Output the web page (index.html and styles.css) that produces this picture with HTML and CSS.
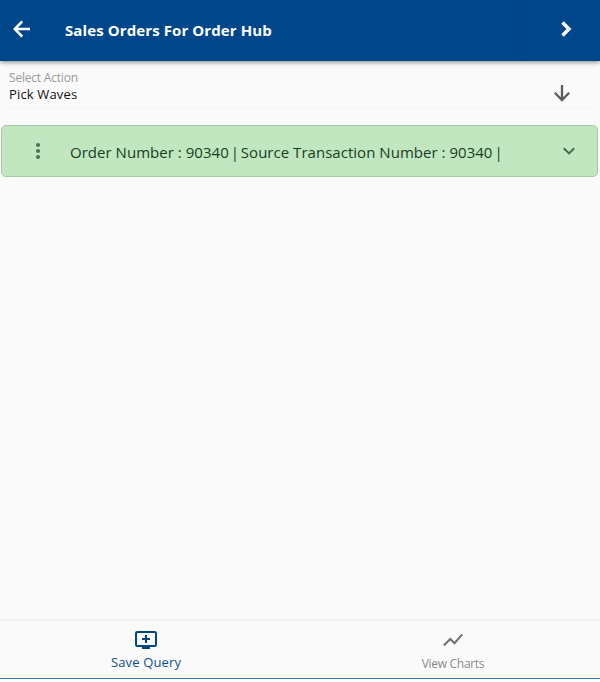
FILE: index.html
```html
<!DOCTYPE html>
<html lang="en">
<head>
<meta charset="utf-8">
<title>Sales Orders For Order Hub</title>
<link rel="stylesheet" href="styles.css">
</head>
<body>
<div class="app">
  <header class="toolbar">
    <button class="back" aria-label="Back">
      <svg width="18" height="18" viewBox="0 0 18 18"><path d="M17 9H2M9.200 1.500L1.700 9l7.500 7.500"/></svg>
    </button>
    <h1 class="title">Sales Orders For Order Hub</h1>
    <button class="next" aria-label="Next">
      <svg width="12" height="18" viewBox="0 0 12 18"><path d="M2.500 2.500L9 9l-6.500 6.500"/></svg>
    </button>
  </header>
  <main class="content">
    <section class="action">
      <div class="field">
        <label class="label">Select Action</label>
        <div class="value">Pick Waves</div>
      </div>
      <svg class="down" width="18" height="18" viewBox="0 0 18 18"><path d="M9 1v15M1.800 8.800L9 16l7.200-7.200"/></svg>
    </section>
    <article class="order">
      <svg class="dots" width="6" height="18" viewBox="0 0 6 18"><circle cx="3" cy="3" r="2.100"/><circle cx="3" cy="9" r="2.100"/><circle cx="3" cy="15" r="2.100"/></svg>
      <p class="summary"><span>Order Number : 90340</span><span>|</span><span>Source Transaction Number : 90340</span><span>|</span></p>
      <svg class="expand" width="12" height="8" viewBox="0 0 12 8"><path d="M.8 1.200L6 6.400l5.200-5.200"/></svg>
    </article>
  </main>
  <nav class="tabs">
    <a class="tab active">
      <svg class="monitor" width="24" height="20" viewBox="0 0 24 20"><rect x="2" y="2" width="20" height="14" rx="1.300"/><path d="M12 5v8M8 9h8"/><path class="stand" d="M8 16h8v3H8z"/></svg>
      <span class="save">Save Query</span>
    </a>
    <a class="tab charts">
      <svg class="trend" width="20" height="20" viewBox="0 0 20 20"><path d="M.8 15.500L7.300 9l4.200 4.200L19.300 4.300"/></svg>
      <span class="caption">View Charts</span>
    </a>
  </nav>
</div>
</body>
</html>
```
FILE: styles.css
```css
* { box-sizing: border-box; }
body { margin: 0; font-family: "Open Sans", "Noto Sans", sans-serif; background: #fff; }
.app { height: 682px; display: flex; flex-direction: column; border-bottom: 3px solid #fdfdfd; background: #fafafa; }
svg { display: block; fill: none; flex: none; }
button { border: 0; background: none; margin: 0; padding: 0; }
.toolbar { height: 61px; flex: none; display: flex; align-items: flex-start; background: #00468b; box-shadow: 0 1px 5px rgba(0, 0, 0, .5); color: #fff; stroke: #fff; stroke-width: 2.500; }
.toolbar button { height: 61px; display: flex; align-items: flex-start; }
.toolbar .back { width: 65px; padding: 20px 0 0 13px; }
.title { flex: 1; margin: 0; padding-top: 20px; font-size: 15px; line-height: 20px; font-weight: 700; letter-spacing: .1px; white-space: nowrap; stroke: none; }
.toolbar .next { width: 75px; padding: 20px 0 0 34px; border-left: 1px solid #003f80; }
.next svg { stroke-width: 3.500; }
.content { flex: 1; }
.action { height: 48px; margin: 0 9px; display: flex; justify-content: space-between; border-bottom: 1px solid #f2f2f2; }
.field { padding-top: 8px; }
.label { display: block; font-size: 12px; line-height: 17px; letter-spacing: -.2px; color: #999; }
.value { font-size: 13px; line-height: 16px; letter-spacing: .15px; color: #111; }
.down { margin: 23px 20px 0 0; stroke: #5c5c5c; stroke-width: 2.300; }
.order { height: 52px; margin: 16px 2px 0 1px; display: flex; align-items: center; background: #c0e7c0; border: 1px solid #a9c9a9; border-radius: 5px; }
.dots { margin: 0 0 0 33px; fill: #4d704f; }
.summary { flex: 1; display: flex; gap: 1.900px; margin: 2px 0 0 29px; font-size: 15px; line-height: 22px; letter-spacing: .03px; color: #1d3b1f; white-space: nowrap; }
.expand { margin-right: 22px; stroke: #456848; stroke-width: 2; }
.tabs { height: 60px; flex: none; display: flex; border-top: 2px solid #f0f0f0; border-bottom: 1px solid #397bb3; }
.tab { flex: none; display: flex; flex-direction: column; align-items: center; padding-top: 9px; line-height: 18px; white-space: nowrap; }
.tab.active { width: 292px; color: #0d508c; font-size: 13px; letter-spacing: .15px; }
.tab.charts { width: 294px; margin-left: 14px; color: #8a8a8a; font-size: 12px; letter-spacing: -.3px; }
.monitor { stroke: #004686; stroke-width: 2; }
.stand { fill: #004686; stroke: none; }
.trend { stroke: #707070; stroke-width: 2; }
.save { margin-top: 3px; }
.caption { margin-top: 5px; }
```
